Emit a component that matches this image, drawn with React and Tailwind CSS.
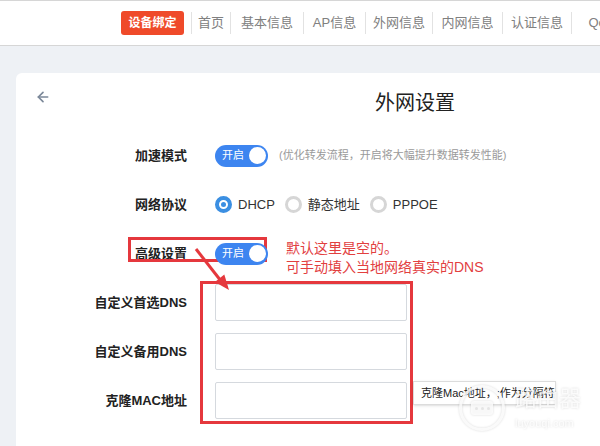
import React from 'react';
import { ArrowLeft } from 'lucide-react';

const navItems = [
  { label: '首页', w: 'w-[39px]' },
  { label: '基本信息', w: 'w-[73px]' },
  { label: 'AP信息', w: 'w-[62px]' },
  { label: '外网信息', w: 'w-[67px]' },
  { label: '内网信息', w: 'w-[70px]' },
  { label: '认证信息', w: 'w-[69px]' },
  { label: 'QoS', w: 'w-[60px]' },
];

const Toggle = () => (
  <div className="relative z-10 flex h-[22px] w-[53px] items-center justify-between rounded-full bg-[#3d85f0] pl-[7px] pr-[2px]">
    <span className="text-[11px] leading-none text-white">开启</span>
    <span className="h-[17px] w-[17px] rounded-full bg-white" />
  </div>
);

const Radio = ({ checked, label }) => (
  <div className="flex items-center">
    {checked ? (
      <span className="flex h-[17px] w-[17px] items-center justify-center rounded-full border-[4px] border-[#3b8fe2]">
        <span className="h-[5px] w-[5px] rounded-full bg-[#3b8fe2]" />
      </span>
    ) : (
      <span className="h-[17px] w-[17px] rounded-full border-[3px] border-[#d6d6d6]" />
    )}
    <span className="ml-[6px] mr-[10px] text-[13px] text-[#333]">{label}</span>
  </div>
);

const Row = ({ label, children, className = '' }) => (
  <div className={`relative flex h-[49px] items-center ${className}`}>
    <div className="w-[171px] text-right text-[13px] font-bold text-[#222]">{label}</div>
    <div className="ml-[28px] flex items-center">{children}</div>
  </div>
);

const Field = () => (
  <input className="h-[37px] w-[192px] rounded-[2px] border border-[#d5d9de] bg-white outline-none" />
);

export default function App() {
  return (
    <div className="relative h-[446px] w-[600px] overflow-hidden bg-[#eef1f5] font-['Liberation_Sans','Noto_Sans_CJK_SC',sans-serif]">
      <div className="flex h-[46px] items-center overflow-hidden border-t border-b border-[#d6d6d6] bg-white pl-[121px]">
        <button className="h-[24px] w-[63px] shrink-0 whitespace-nowrap rounded-[3px] bg-[#ef4a2a] text-[12px] font-bold text-white">设备绑定</button>
        <div className="ml-[7px] flex shrink-0 items-center">
          {navItems.map((it) => (
            <div key={it.label} className={`flex h-[22px] shrink-0 items-center justify-center border-l border-[#e2e2e2] text-[13px] text-[#808080] ${it.w}`}>
              <span className="whitespace-nowrap">{it.label}</span>
            </div>
          ))}
        </div>
      </div>

      <div className="ml-[16px] mt-[27px] h-[400px] rounded-tl-[6px] bg-white">
        <div className="flex h-[58px] items-start pt-[16px]">
          <ArrowLeft className="ml-[19px] text-[#7b8899]" size={16} strokeWidth={2.5} />
          <h1 className="ml-[324px] text-[20px] leading-[28px] text-[#222]">外网设置</h1>
        </div>

        <Row label="加速模式">
          <Toggle />
          <span className="ml-[11px] whitespace-nowrap text-[11px] text-[#9a9a9a]">(优化转发流程，开启将大幅提升数据转发性能)</span>
        </Row>

        <Row label="网络协议">
          <Radio checked label="DHCP" />
          <Radio label="静态地址" />
          <Radio label="PPPOE" />
        </Row>

        <Row label="高级设置">
          <div className="absolute left-[112px] top-[8px] h-[25px] w-[139px] border-[3px] border-[#e5383d]" />
          <Toggle />
          <div className="ml-[18px] mt-[9px] whitespace-nowrap text-[14px] leading-[19px] text-[#e2403f]">
            <div>默认这里是空的。</div>
            <div>可手动填入当地网络真实的DNS</div>
          </div>
        </Row>

        <div className="relative">
          <Row label="自定义首选DNS">
            <Field />
          </Row>
          <Row label="自定义备用DNS">
            <Field />
          </Row>
          <Row label="克隆MAC地址">
            <Field />
          </Row>
          <div className="pointer-events-none absolute left-[184px] top-[3px] h-[143px] w-[213px] border-[3px] border-[#e5383d]" />
        </div>
      </div>

      <svg className="absolute left-[190px] top-[245px]" width="50" height="55" viewBox="0 0 50 55">
        <line x1="6" y1="4" x2="31" y2="36" stroke="#e5383d" strokeWidth="3" />
        <polygon points="39,45 34.3,29.5 24.9,37.1" fill="#e5383d" />
      </svg>

      <div className="absolute left-[413px] top-[381px] flex h-[24px] w-[143px] items-center border border-[#dcdcdc] bg-white px-[7px] text-[11px] text-[#222] shadow-sm">
        <span className="whitespace-nowrap">克隆Mac地址，;作为分隔符</span>
      </div>

      <div className="pointer-events-none absolute left-[459px] top-[385px] flex items-center text-white/80 drop-shadow-[0_0_1px_rgba(0,0,0,0.18)]">
        <div className="flex h-[46px] w-[46px] items-center justify-center rounded-full border-[3px] border-white/80">
          <div className="flex h-[14px] w-[22px] items-center justify-center gap-[3px] rounded-[3px] bg-white/80">
            <span className="h-[3px] w-[3px] rounded-full bg-[#e5e5e5]" />
            <span className="h-[3px] w-[3px] rounded-full bg-[#e5e5e5]" />
            <span className="h-[3px] w-[3px] rounded-full bg-[#e5e5e5]" />
          </div>
        </div>
        <div className="ml-[10px] flex flex-col">
          <span className="text-[22px] leading-[24px]">路由器</span>
          <span className="mt-[6px] text-[11px] leading-[12px]">luyouqi.com</span>
        </div>
      </div>
    </div>
  );
}
